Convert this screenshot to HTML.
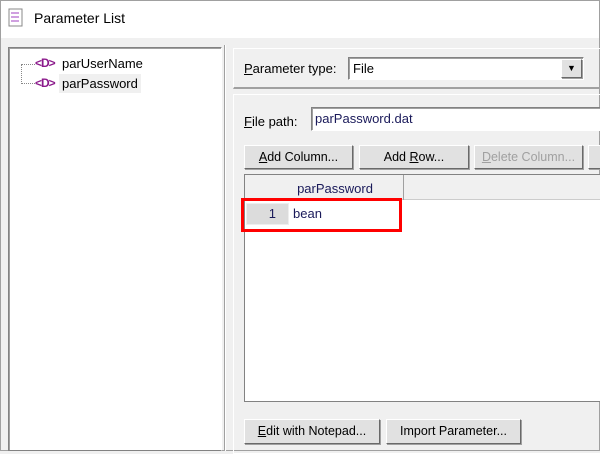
<!DOCTYPE html><html><head><style>
*{box-sizing:border-box}body{margin:0;width:600px;height:451px;overflow:hidden;background:#f0f0f0;font-family:"Liberation Sans",sans-serif;font-size:12px;color:#000;position:relative}
.a{position:absolute}
.btn{position:absolute;background:#e1e1e1;border:1px solid #fff;border-right-color:#696969;border-bottom-color:#696969;box-shadow:1px 1px 0 #a0a0a0;text-align:center;line-height:22px;font-size:12.5px}
.sunk{position:absolute;background:#fff;border:1px solid #828282;border-right-color:#fff;border-bottom-color:#fff;box-shadow:inset 1px 1px 0 #a0a0a0}
u{text-decoration:underline}
</style></head><body>
<div class="a" style="left:0;top:0;width:600px;height:451px;border:1px solid #a0a0a0"></div>
<div class="a" style="left:1px;top:1px;width:598px;height:37px;background:#fff"></div>
<svg class="a" style="left:8px;top:8px" width="16" height="20" viewBox="0 0 16 20"><rect x="1" y="1" width="13" height="17" fill="#fff" stroke="#888"/><g stroke="#a040c0"><line x1="3" y1="5" x2="11" y2="5"/><line x1="3" y1="9" x2="11" y2="9"/><line x1="3" y1="13" x2="11" y2="13"/></g></svg>
<div class="a" style="left:34px;top:10px;font-size:14px">Parameter List</div>
<div class="a" style="left:8px;top:47px;width:214px;height:404px;background:#fff;border:1px solid #828282;border-right-color:#fff;box-shadow:inset 1px 1px 0 #a0a0a0"></div>
<div class="a" style="left:21px;top:64px;width:14px;height:20px;border-left:1px dotted #888;border-bottom:1px dotted #888"></div>
<div class="a" style="left:21px;top:64px;width:14px;border-top:1px dotted #888"></div>
<div class="a" style="left:35px;top:56px;color:#8b1a8b;font-weight:bold;font-size:12px;letter-spacing:-1px">&lt;D&gt;</div>
<div class="a" style="left:62px;top:56px;font-size:13px">parUserName</div>
<div class="a" style="left:35px;top:76px;color:#8b1a8b;font-weight:bold;font-size:12px;letter-spacing:-1px">&lt;D&gt;</div>
<div class="a" style="left:59px;top:74px;width:82px;height:19px;background:#f0f0f0"></div>
<div class="a" style="left:62px;top:76px;font-size:13px">parPassword</div>
<div class="a" style="left:224px;top:45px;width:2px;height:406px;border-left:1px solid #a0a0a0;border-right:1px solid #fff"></div>
<div class="a" style="left:233px;top:48px;width:370px;height:41px;border:1px solid #fff;border-bottom:2px solid #a0a0a0"></div>
<div class="a" style="left:244px;top:61px;font-size:13px"><u>P</u>arameter type:</div>
<div class="sunk" style="left:348px;top:57px;width:236px;height:23px"></div>
<div class="a" style="left:353px;top:61px;font-size:13px">File</div>
<div class="btn" style="left:561px;top:59px;width:21px;height:19px;line-height:17px;font-size:9px">▼</div>
<div class="a" style="left:233px;top:94px;width:370px;height:360px;border:1px solid #fff;border-right:none"></div>
<div class="a" style="left:244px;top:114px;font-size:13px"><u>F</u>ile path:</div>
<div class="sunk" style="left:311px;top:107px;width:300px;height:24px"></div>
<div class="a" style="left:315px;top:111px;font-size:13px;color:#1a1a5a">parPassword.dat</div>
<div class="btn" style="left:244px;top:145px;width:109px;height:24px"><u>A</u>dd Column...</div>
<div class="btn" style="left:359px;top:145px;width:110px;height:24px">Add <u>R</u>ow...</div>
<div class="btn" style="left:474px;top:145px;width:109px;height:24px;color:#a0a0a0"><u>D</u>elete Column...</div>
<div class="btn" style="left:588px;top:145px;width:30px;height:24px"></div>
<div class="a" style="left:244px;top:174px;width:370px;height:228px;background:#fff;border:1px solid #828282"></div>
<div class="a" style="left:245px;top:175px;width:370px;height:25px;background:#f0f0f0;border-bottom:1px solid #ccc"></div>
<div class="a" style="left:403px;top:175px;width:1px;height:25px;background:#a0a0a0"></div>
<div class="a" style="left:245px;top:181px;width:180px;text-align:center;font-size:13px;color:#1a1a5a">parPassword</div>
<div class="a" style="left:246px;top:203px;width:43px;height:22px;background:#dcdcdc;border:1px solid #eee"></div>
<div class="a" style="left:246px;top:206px;width:30px;text-align:right;font-size:13px;color:#1a1a5a">1</div>
<div class="a" style="left:293px;top:206px;font-size:13px;color:#1a1a5a">bean</div>
<div class="a" style="left:241px;top:198px;width:161px;height:34px;border:3px solid #f00"></div>
<div class="btn" style="left:244px;top:419px;width:136px;height:25px"><u>E</u>dit with Notepad...</div>
<div class="btn" style="left:386px;top:419px;width:135px;height:25px">Import Parameter...</div>
</body></html>
